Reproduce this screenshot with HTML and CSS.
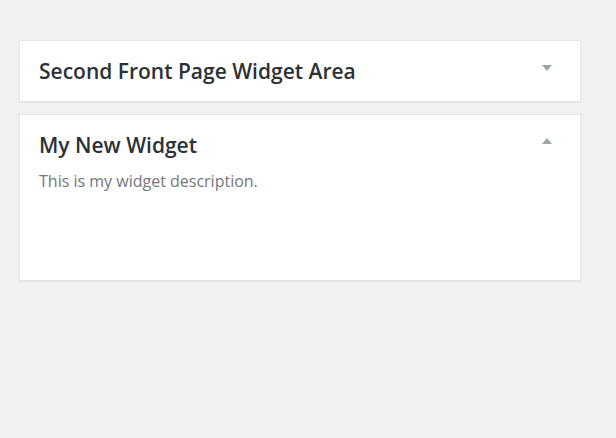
FILE: index.html
```html
<html>
	<head>
		<title>Widgets</title>
		<link rel="stylesheet" href="styles.css">
	</head>
	<body>
		<div class="widgets">
			<div class="widget closed">
				<div class="widget-top">
					<h2>Second Front Page Widget Area</h2>
					<span class="toggle down"></span>
				</div>
			</div>

			<div class="widget open">
				<div class="widget-top">
					<h2>My New Widget</h2>
					<span class="toggle up"></span>
				</div>
				<p class="description">This is my widget description.</p>
			</div>
		</div>
	</body>
</html>
```

FILE: styles.css
```css
body { background:#f1f1f1; font-family:"Open Sans", "Noto Sans", sans-serif; margin:0; color:#23282d; }

.widgets {
	width:562px;
	padding:40px 0 0 19px;
	display:flex;
	flex-direction:column;
	gap:12px;
}

.widget {
	background:#fff;
	border:1px solid #e5e5e5;
	box-shadow:0 1px 1px rgba(0,0,0,0.04);
}

.widget-top {
	display:flex;
	align-items:center;
	justify-content:space-between;
	padding:0 28px 0 19px;
	height:60px;
}

.open .widget-top { height:62px; }

h2 {
	font-size:21px;
	font-weight:600;
	margin:0;
	color:#2c3136;
}

.open h2 { margin-top:-2px; }

.toggle {
	width:0;
	height:0;
	border-left:5px solid transparent;
	border-right:5px solid transparent;
}
.toggle.down { border-top:6px solid #a0a5aa; margin-top:-6px; }
.toggle.up { border-bottom:6px solid #a0a5aa; margin-top:-10px; }

.description {
	margin:-7px 0 0 19px;
	font-size:16px;
	color:#72777c;
	height:110px;
}
```
